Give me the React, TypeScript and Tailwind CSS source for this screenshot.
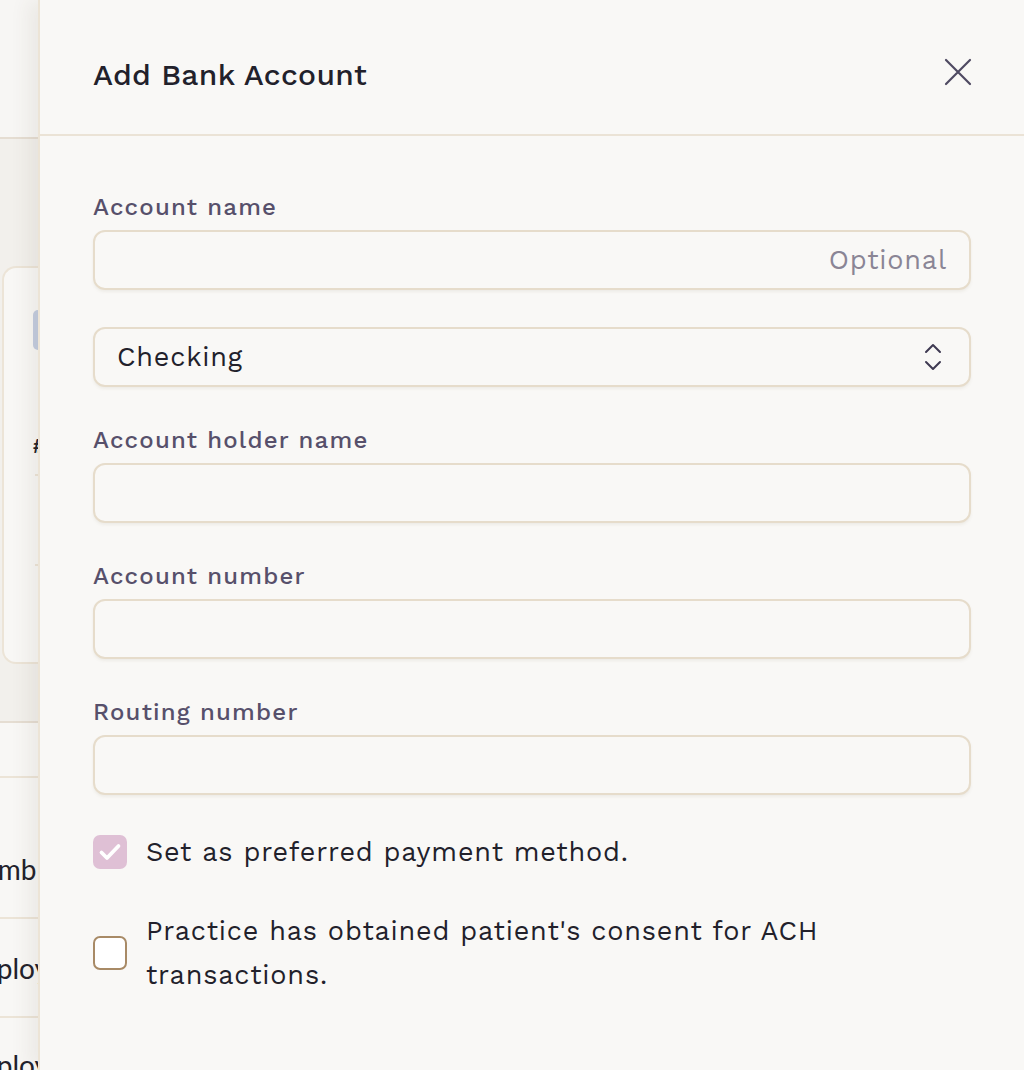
import { useState } from "react";

const FONT = "font-['Work_Sans','Inter','Noto_Sans',sans-serif]";

function Field({ label, placeholder }: { label: string; placeholder?: string }) {
  return (
    <div className="flex flex-col gap-[8px]">
      <label className="text-[24px] font-medium leading-[30px] tracking-[0.05em] text-[#57506b]">{label}</label>
      <input
        type="text"
        placeholder={placeholder}
        className="h-[60px] w-full rounded-[12px] border-2 border-[#e6dccb] bg-[#f9f8f6] px-[22px] text-right text-[27px] tracking-[0.03em] text-[#22212b] shadow-[0_2px_3px_rgba(120,100,70,0.08)] outline-none placeholder:text-[#8a8595]"
      />
    </div>
  );
}

function ChevronsUpDown() {
  return (
    <svg width="20" height="30" viewBox="0 0 20 30" fill="none" stroke="#3f3a52" strokeWidth="2" strokeLinecap="round" strokeLinejoin="round">
      <path d="M3 10 L10 3 L17 10" />
      <path d="M3 20 L10 27 L17 20" />
    </svg>
  );
}

function Checkbox({ checked, onChange }: { checked: boolean; onChange: () => void }) {
  return (
    <button
      type="button"
      onClick={onChange}
      className={
        checked
          ? "flex h-[34px] w-[34px] shrink-0 items-center justify-center rounded-[7px] bg-[#dfc0d5]"
          : "flex h-[34px] w-[34px] shrink-0 items-center justify-center rounded-[7px] border-2 border-[#a88a66] bg-white"
      }
    >
      {checked && (
        <svg width="26" height="26" viewBox="0 0 26 26" fill="none" stroke="white" strokeWidth="3.8" strokeLinecap="round" strokeLinejoin="round">
          <path d="M4.5 13.5 L10 19 L21.5 7" />
        </svg>
      )}
    </button>
  );
}

export default function App() {
  const [preferred, setPreferred] = useState(true);
  const [consent, setConsent] = useState(false);

  return (
    <div className={`relative h-[1070px] w-[1024px] overflow-hidden bg-[#f8f7f5] ${FONT}`}>
      {/* page behind the drawer */}
      <div className="flex h-full w-[38px] flex-col overflow-hidden font-['Lato',sans-serif]">
        <div className="h-[139px] shrink-0 border-b-2 border-[#e5ddd2] bg-[#f7f6f4]" />
        <div className="shrink-0 bg-[#f2f0ec] pb-[57px] pl-[2px] pt-[127px]">
          <div className="h-[398px] rounded-tl-[14px] rounded-bl-[14px] border-2 border-r-0 border-[#ece4d7] bg-[#f8f7f5] pt-[42px]">
            <div className="ml-[29px] h-[40px] rounded-l-[8px] bg-[#c3cde0]" />
            <div className="ml-[29px] mt-[86px] text-[18px] font-bold leading-[20px] text-[#22212b]">#</div>
            <div className="ml-[31px] mt-[18px] h-[2px] bg-[#ece4d7]" />
            <div className="ml-[31px] mt-[88px] h-[2px] bg-[#ece4d7]" />
          </div>
        </div>
        <div className="h-[55px] shrink-0 border-t-2 border-[#e5ddd2] bg-[#f8f7f5]" />
        <div className="flex h-[141px] shrink-0 items-center border-t-2 border-[#ece4d7] bg-[#f8f7f5] pt-[42px]">
          <span className="-ml-[39px] whitespace-nowrap text-[28px] text-[#22212b]">Numb</span>
        </div>
        <div className="flex h-[99px] shrink-0 items-center border-t-2 border-[#ece4d7] bg-[#f8f7f5]">
          <span className="-ml-[42px] whitespace-nowrap text-[28px] text-[#22212b]">Employ</span>
        </div>
        <div className="flex h-[99px] shrink-0 items-start border-t-2 border-[#ece4d7] bg-[#f8f7f5] pt-[26px]">
          <span className="-ml-[42px] whitespace-nowrap text-[28px] text-[#22212b]">Employ</span>
        </div>
      </div>

      {/* drawer */}
      <aside className="absolute bottom-0 left-[38px] right-0 top-0 flex flex-col border-l-2 border-[#ece4d6] bg-[#f9f8f6] shadow-[-10px_0_18px_rgba(90,70,40,0.07)]">
        <header className="flex h-[136px] shrink-0 items-center justify-between border-b-2 border-[#ebe3d6] pl-[53px] pr-[52px]">
          <h2 className="mt-[14px] text-[30px] font-medium tracking-[0.01em] text-[#22212b]">Add Bank Account</h2>
          <button type="button" className="mt-[10px] text-[#4f4a62]" aria-label="Close">
            <svg width="28" height="28" viewBox="0 0 28 28" fill="none" stroke="currentColor" strokeWidth="2.2" strokeLinecap="round">
              <path d="M2 2 L26 26 M26 2 L2 26" />
            </svg>
          </button>
        </header>

        <form className="flex flex-col gap-[38px] px-[53px] pt-[56px]">
          <Field label="Account name" placeholder="Optional" />

          <div className="relative -mt-[1px]">
            <select className="h-[60px] w-full appearance-none rounded-[12px] border-2 border-[#e6dccb] bg-[#f9f8f6] px-[22px] text-[27px] tracking-[0.03em] text-[#22212b] shadow-[0_2px_3px_rgba(120,100,70,0.08)] outline-none">
              <option>Checking</option>
              <option>Savings</option>
            </select>
            <div className="pointer-events-none absolute right-[28px] top-1/2 -translate-y-1/2">
              <ChevronsUpDown />
            </div>
          </div>

          <Field label="Account holder name" />
          <Field label="Account number" />
          <Field label="Routing number" />

          <div className="-mt-[3px] flex flex-col gap-[35px]">
            <label className="flex items-center gap-[19px] text-[27px] leading-[44px] tracking-[0.03em] text-[#22212b]">
              <Checkbox checked={preferred} onChange={() => setPreferred(!preferred)} />
              <span>Set as preferred payment method.</span>
            </label>
            <label className="flex items-center gap-[19px] text-[27px] leading-[44px] tracking-[0.03em] text-[#22212b]">
              <Checkbox checked={consent} onChange={() => setConsent(!consent)} />
              <span className="max-w-[700px]">Practice has obtained patient's consent for ACH transactions.</span>
            </label>
          </div>
        </form>
      </aside>
    </div>
  );
}
